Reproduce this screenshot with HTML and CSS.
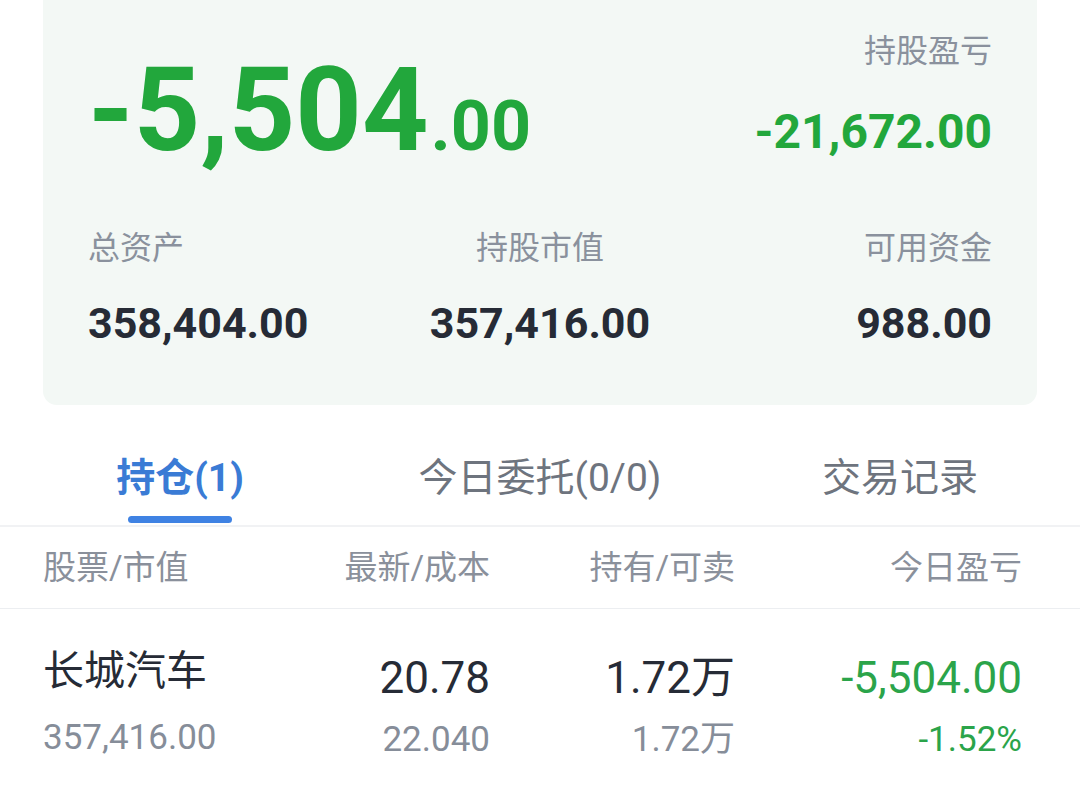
FILE: index.html
```html
<!DOCTYPE html>
<html lang="zh-CN">
<head>
<meta charset="utf-8">
<title>持仓</title>
<link rel="stylesheet" href="styles.css">
</head>
<body>
<div class="page">
  <section class="card">
    <div class="card-top">
      <div class="big"><span class="big-int">-5,504</span><span class="big-dec">.00</span></div>
      <div class="pnl">
        <div class="label">持股盈亏</div>
        <div class="pnl-value">-21,672.00</div>
      </div>
    </div>
    <div class="stats">
      <div class="stat stat-left">
        <div class="label">总资产</div>
        <div class="stat-value">358,404.00</div>
      </div>
      <div class="stat stat-center">
        <div class="label">持股市值</div>
        <div class="stat-value">357,416.00</div>
      </div>
      <div class="stat stat-right">
        <div class="label">可用资金</div>
        <div class="stat-value">988.00</div>
      </div>
    </div>
  </section>

  <nav class="tabs">
    <div class="tab tab-active"><span class="tab-text">持仓(1)</span><span class="tab-bar"></span></div>
    <div class="tab"><span class="tab-text">今日委托(0/0)</span></div>
    <div class="tab"><span class="tab-text">交易记录</span></div>
  </nav>

  <div class="table-head">
    <div class="th th-left">股票/市值</div>
    <div class="th">最新/成本</div>
    <div class="th">持有/可卖</div>
    <div class="th">今日盈亏</div>
  </div>

  <div class="table-row">
    <div class="cell cell-name">
      <div class="name">长城汽车</div>
      <div class="sub">357,416.00</div>
    </div>
    <div class="cell cell-num">
      <div class="main">20.78</div>
      <div class="sub">22.040</div>
    </div>
    <div class="cell cell-num">
      <div class="main">1.72万</div>
      <div class="sub">1.72万</div>
    </div>
    <div class="cell cell-num green">
      <div class="main">-5,504.00</div>
      <div class="sub">-1.52%</div>
    </div>
  </div>
</div>
</body>
</html>
```

FILE: styles.css
```css
* { box-sizing: border-box; }

html, body {
  margin: 0;
  padding: 0;
  background: #ffffff;
}

body {
  font-family: Roboto, "Noto Sans CJK SC", sans-serif;
  color: #262b36;
}

.page {
  width: 1080px;
  height: 788px;
  overflow: hidden;
}

.card {
  margin: 0 43px;
  height: 405px;
  background: #f3f8f5;
  border-radius: 0 0 14px 14px;
  padding: 0 45px;
}

.card-top {
  height: 228px;
  display: flex;
  justify-content: space-between;
  align-items: flex-start;
}

.big {
  margin-top: 52px;
  font-weight: 700;
  color: #22a73c;
  line-height: 116px;
  white-space: nowrap;
}

.big-int {
  font-size: 116px;
}

.big-dec {
  font-size: 70px;
  margin-left: 2px;
}

.pnl {
  margin-top: 31px;
  text-align: right;
}

.label {
  font-size: 32px;
  line-height: 40px;
  color: #8a919d;
}

.pnl-value {
  margin-top: 37px;
  font-size: 48px;
  line-height: 48px;
  font-weight: 700;
  color: #22a73c;
}

.stats {
  display: grid;
  grid-template-columns: 1fr 1fr 1fr;
}

.stat-left { text-align: left; }
.stat-center { text-align: center; }
.stat-right { text-align: right; }

.stat-value {
  margin-top: 33px;
  font-size: 43px;
  line-height: 44px;
  font-weight: 700;
  color: #262b36;
}

.tabs {
  height: 122px;
  display: grid;
  grid-template-columns: 1fr 1fr 1fr;
  border-bottom: 2px solid #f1f2f4;
}

.tab {
  display: flex;
  flex-direction: column;
  align-items: center;
  padding-top: 48px;
}

.tab-text {
  font-size: 39px;
  line-height: 50px;
  color: #6e747e;
  white-space: nowrap;
}

.tab-active .tab-text {
  color: #3a7bd5;
  font-weight: 700;
}

.tab-bar {
  margin-top: 13px;
  width: 104px;
  height: 7px;
  border-radius: 4px;
  background: #3f82e3;
}

.table-head {
  display: grid;
  grid-template-columns: 1fr 245px 245px 287px;
  padding: 21px 58px 20px 43px;
  border-bottom: 1px solid #eceef1;
}

.th {
  font-size: 33px;
  line-height: 40px;
  color: #8a909b;
  text-align: right;
  white-space: nowrap;
}

.th-left { text-align: left; }

.table-row {
  display: grid;
  grid-template-columns: 1fr 245px 245px 287px;
  padding: 0 58px 0 43px;
}

.cell {
  display: flex;
  flex-direction: column;
  white-space: nowrap;
}

.cell-name {
  align-items: flex-start;
  padding-top: 36px;
}

.cell-num {
  align-items: flex-end;
  padding-top: 43px;
}

.name {
  font-size: 41px;
  line-height: 52px;
  color: #262b36;
}

.cell-name .sub {
  margin-top: 19px;
}

.main {
  font-size: 44px;
  line-height: 52px;
  color: #262b36;
}

.sub {
  margin-top: 14px;
  font-size: 35px;
  line-height: 44px;
  color: #868d99;
}

.green .main,
.green .sub {
  color: #2ba44a;
}
```
